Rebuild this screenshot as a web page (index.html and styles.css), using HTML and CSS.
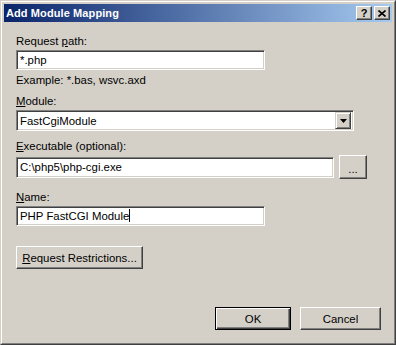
FILE: index.html
```html
<!DOCTYPE html>
<html>

<head>
    <title>Add Module Mapping</title>
    <link rel="stylesheet" href="styles.css">
</head>

<body>
    <div class="window">
        <div class="frame">
            <div class="titlebar">
                <span class="title">Add Module Mapping</span>
                <div class="capbtns">
                    <span class="capbtn help">?</span>
                    <span class="capbtn close">
                        <svg width="8" height="7" viewBox="0 0 8 7">
                            <path d="M0.5 0.5 L7.5 6.5 M7.5 0.5 L0.5 6.5" stroke="#000" stroke-width="1.6" fill="none" />
                        </svg>
                    </span>
                </div>
            </div>

            <div class="client">
                <div class="lbl first">Request <u>p</u>ath:</div>
                <div class="edit short">*.php</div>
                <div class="hint">Example: *.bas, wsvc.axd</div>

                <div class="lbl gap-module"><u>M</u>odule:</div>
                <div class="combo">
                    <span class="combo-text">FastCgiModule</span>
                    <span class="drop">
                        <svg width="7" height="4" viewBox="0 0 7 4">
                            <path d="M0 0 H7 L3.5 4 Z" fill="#000" />
                        </svg>
                    </span>
                </div>

                <div class="lbl gap-exe"><u>E</u>xecutable (optional):</div>
                <div class="row">
                    <div class="edit exe">C:\php5\php-cgi.exe</div>
                    <span class="btn browse">...</span>
                </div>

                <div class="lbl gap-name"><u>N</u>ame:</div>
                <div class="edit short">PHP FastCGI Module<span class="caret"></span></div>

                <span class="btn restrict"><u>R</u>equest Restrictions...</span>

                <div class="footer">
                    <span class="btn default ok">OK</span>
                    <span class="btn cancel">Cancel</span>
                </div>
            </div>
        </div>
    </div>
</body>

</html>
```

FILE: styles.css
```css
body {
    margin: 0;
    background-color: #d4d0c8;
    font-family: "Liberation Sans", Arial, sans-serif;
    font-size: 11.4px;
    color: #000;
}

.window {
    width: 396px;
    height: 345px;
    box-sizing: border-box;
    border: 1px solid;
    border-color: #d4d0c8 #404040 #404040 #d4d0c8;
    display: flex;
    background-color: #d4d0c8;
}

.frame {
    flex: 1;
    border: 1px solid;
    border-color: #fff #808080 #808080 #fff;
    padding: 2px;
    display: flex;
    flex-direction: column;
}

.titlebar {
    height: 18px;
    flex: none;
    display: flex;
    align-items: center;
    justify-content: space-between;
    padding: 0 2px 0 2px;
    background: linear-gradient(to right, #0a246a, #a6caf0);
}

.title {
    color: #fff;
    font-weight: bold;
    font-size: 11px;
    letter-spacing: 0.1px;
}

.capbtns {
    display: flex;
    gap: 2px;
}

.capbtn {
    width: 16px;
    height: 14px;
    box-sizing: border-box;
    background-color: #d4d0c8;
    border: 1px solid;
    border-color: #fff #404040 #404040 #fff;
    box-shadow: inset -1px -1px #808080;
    display: flex;
    align-items: center;
    justify-content: center;
    font-weight: bold;
    font-size: 11px;
    line-height: 12px;
}

.client {
    flex: 1;
    display: flex;
    flex-direction: column;
    align-items: flex-start;
    padding: 13px 11px 11px 12px;
}

.lbl {
    height: 13px;
    line-height: 13px;
    margin-bottom: 2px;
}

.gap-module {
    margin-top: 8px;
}

.gap-exe {
    margin-top: 9px;
}

.gap-name {
    margin-top: 12px;
}

.hint {
    height: 13px;
    line-height: 13px;
    margin-top: 4px;
}

.edit {
    height: 20px;
    box-sizing: border-box;
    background-color: #fff;
    border: 1px solid;
    border-color: #808080 #fff #fff #808080;
    box-shadow: inset 1px 1px #404040, inset -1px -1px #d4d0c8;
    padding: 0 3px;
    line-height: 18px;
    white-space: nowrap;
}

.short {
    width: 249px;
}

.caret {
    display: inline-block;
    width: 1px;
    height: 13px;
    background-color: #000;
    vertical-align: -2px;
}

.combo {
    width: 338px;
    height: 21px;
    box-sizing: border-box;
    background-color: #fff;
    border: 1px solid;
    border-color: #808080 #fff #fff #808080;
    box-shadow: inset 1px 1px #404040, inset -1px -1px #d4d0c8;
    padding: 2px 2px 2px 3px;
    display: flex;
    justify-content: space-between;
    align-items: center;
}

.drop {
    width: 16px;
    height: 17px;
    box-sizing: border-box;
    background-color: #d4d0c8;
    border: 1px solid;
    border-color: #d4d0c8 #404040 #404040 #d4d0c8;
    box-shadow: inset 1px 1px #fff, inset -1px -1px #808080;
    display: flex;
    align-items: center;
    justify-content: center;
}

.row {
    display: flex;
    align-items: center;
}

.exe {
    width: 318px;
    height: 21px;
    line-height: 19px;
}

.btn {
    box-sizing: border-box;
    height: 23px;
    display: flex;
    align-items: center;
    justify-content: center;
    background-color: #d4d0c8;
    border: 1px solid;
    border-color: #fff #404040 #404040 #fff;
    box-shadow: inset -1px -1px #808080;
}

.browse {
    width: 28px;
    margin-left: 5px;
    height: 24px;
    padding-top: 4px;
}

.restrict {
    width: 127px;
    margin-top: 20px;
}

.footer {
    margin-top: auto;
    align-self: flex-end;
    display: flex;
    gap: 9px;
}

.ok {
    width: 76px;
}

.cancel {
    width: 81px;
}

.default {
    border: 1px solid #000;
    box-shadow: inset 1px 1px #fff, inset -1px -1px #404040, inset -2px -2px #808080;
}
```
